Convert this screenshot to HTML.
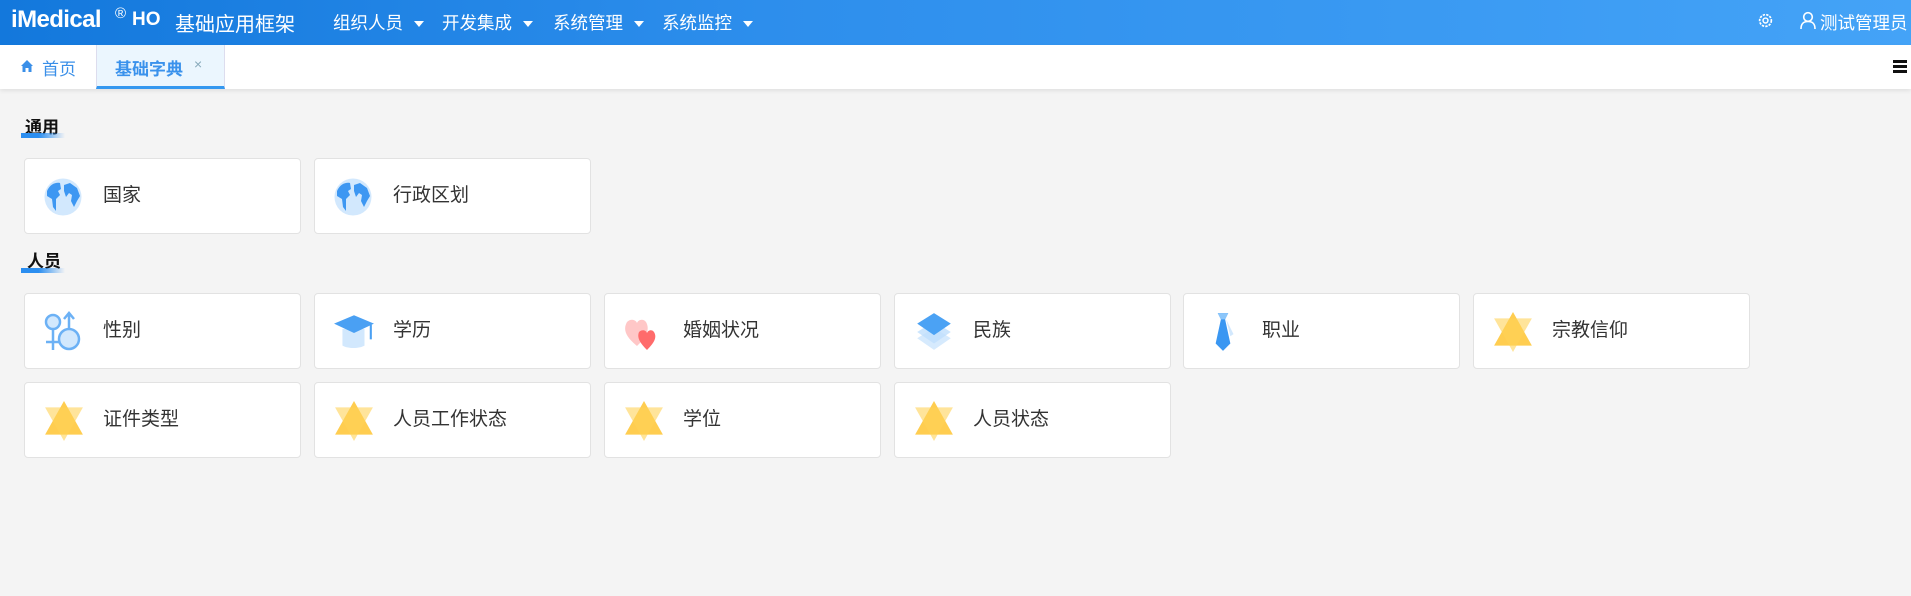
<!DOCTYPE html>
<html><head><meta charset="utf-8"><style>
*{margin:0;padding:0;box-sizing:border-box}
body{width:1911px;height:596px;background:#f4f4f4;font-family:"Liberation Sans","Noto Sans CJK SC",sans-serif;position:relative;overflow:hidden}
.hd{position:absolute;left:0;top:0;width:1911px;height:45px;background:linear-gradient(90deg,#1378dc 0%,#2d8eec 40%,#44a3f7 100%);color:#fff}
.a{position:absolute;white-space:nowrap}
.tri{display:inline-block;width:0;height:0;border-left:5px solid transparent;border-right:5px solid transparent;border-top:6px solid #fff;vertical-align:middle}
.tb{position:absolute;left:0;top:45px;width:1911px;height:44px;background:#fff;box-shadow:0 2px 4px rgba(0,0,0,.08)}
.card{position:absolute;width:277px;height:76px;background:#fff;border:1px solid #e2e2e2;border-radius:4px}
.card svg{position:absolute;left:18px;top:17px}
.card span{position:absolute;left:78px;top:26px;font-size:19px;color:#333;line-height:22px}
.sec{position:absolute;font-size:17px;font-weight:bold;color:#111;line-height:20px}
.bar{position:absolute;height:5px;width:44px;background:linear-gradient(90deg,#2b8ef0 0%,#2b8ef0 40%,rgba(43,142,240,0) 100%)}
</style></head><body>
<div class="hd">
 <div class="a" style="left:11px;top:6px;font-size:24px;font-weight:bold;letter-spacing:-0.6px">iMedical</div>
 <div class="a" style="left:115px;top:5px;font-size:15px">®</div>
 <div class="a" style="left:132px;top:9px;font-size:19px;font-weight:bold">HO</div>
 <div class="a" style="left:175px;top:8px;font-size:20px">基础应用框架</div>
 <div class="a" style="left:333px;top:10px;font-size:17.5px">组织人员 <span class="tri" style="margin-left:6px"></span></div>
 <div class="a" style="left:442px;top:10px;font-size:17.5px">开发集成 <span class="tri" style="margin-left:6px"></span></div>
 <div class="a" style="left:553px;top:10px;font-size:17.5px">系统管理 <span class="tri" style="margin-left:6px"></span></div>
 <div class="a" style="left:662px;top:10px;font-size:17.5px">系统监控 <span class="tri" style="margin-left:6px"></span></div>
 <svg class="a" style="left:1757px;top:12px" width="17" height="17" viewBox="0 0 16 16"><circle cx="8" cy="8" r="5.5" fill="none" stroke="#fff" stroke-width="1.6" stroke-dasharray="2.2 1.1"/><circle cx="8" cy="8" r="2.3" fill="none" stroke="#fff" stroke-width="1.4"/></svg>
 <svg class="a" style="left:1799px;top:11px" width="18" height="19" viewBox="0 0 18 19"><circle cx="9" cy="6" r="4.3" fill="none" stroke="#fff" stroke-width="1.6"/><path d="M2 18 C2 12 5 10.5 9 10.5 C13 10.5 16 12 16 18" fill="none" stroke="#fff" stroke-width="1.6"/></svg>
 <div class="a" style="left:1820px;top:10px;font-size:17.5px">测试管理员</div>
</div>
<div class="tb">
 <svg class="a" style="left:20px;top:14px" width="14" height="14" viewBox="0 0 14 14"><path d="M7 1 L13 7 L11.5 7 L11.5 13 L8.5 13 L8.5 9 L5.5 9 L5.5 13 L2.5 13 L2.5 7 L1 7 Z" fill="#3a8fe8"/></svg>
 <div class="a" style="left:42px;top:10px;font-size:17px;color:#3a8fe8">首页</div>
 <div class="a" style="left:96px;top:0;width:129px;height:44px;background:#ebf6fe;border-left:1px solid #dde;border-right:1px solid #dde;border-bottom:3px solid #3498f0"></div>
 <div class="a" style="left:115px;top:10px;font-size:17px;font-weight:bold;color:#3a92ec">基础字典</div>
 <div class="a" style="left:194px;top:11px;font-size:14px;color:#8ab">×</div>
 <div class="a" style="left:1893px;top:15px;width:14px;height:2.5px;background:#111;box-shadow:0 5px 0 #111,0 10px 0 #111"></div>
</div>
<div class="sec" style="left:25px;top:118px">通用</div><div class="bar" style="left:21px;top:133px"></div>
<div class="sec" style="left:27px;top:252px">人员</div><div class="bar" style="left:21px;top:268px"></div>

<svg width="0" height="0" style="position:absolute"><defs>
<symbol id="globe" viewBox="0 0 40 40"><circle cx="20" cy="20" r="18.5" fill="#d2e8fd"/><path d="M4 14 C7 7 13 5 17 6 L18 12 L15 14 L17 18 L13 22 L13 34 L10 30 L9 22 L4 19Z M21 8 L27 6 L34 11 L37 19 L34 24 L31 30 L28 24 L29 18 L26 16 L23 20 L21 14Z" fill="#3d97f2"/></symbol>
<symbol id="star" viewBox="0 0 40 40"><path d="M20 1 L38 33 L2 33Z" fill="#ffc83d" opacity=".9"/><path d="M20 39 L38 7 L2 7Z" fill="#ffd257" opacity=".6"/></symbol>
</defs></svg>

<div class="card" style="left:24px;top:158px"><svg width="40" height="42"><use href="#globe"/></svg><span>国家</span></div>
<div class="card" style="left:314px;top:158px"><svg width="40" height="42"><use href="#globe"/></svg><span>行政区划</span></div>

<div class="card" style="left:24px;top:293px"><svg width="40" height="42" viewBox="0 0 40 40"><circle cx="10" cy="10" r="7" fill="#d2e8fd" stroke="#6cb1f5" stroke-width="2.5"/><path d="M10 17 V38 M3 30 H17" stroke="#6cb1f5" stroke-width="2.5"/><circle cx="26" cy="27" r="10" fill="#d2e8fd" stroke="#6cb1f5" stroke-width="2.5"/><path d="M26 17 V2 M21 7 L26 1 L31 7" fill="none" stroke="#6cb1f5" stroke-width="2.5"/></svg><span>性别</span></div>
<div class="card" style="left:314px;top:293px"><svg width="42" height="42" viewBox="0 0 40 40"><path d="M9 17 V33 C14 36 25 36 30 33 V17Z" fill="#d2e8fd"/><path d="M1 12 L20 4 L39 12 L20 21Z" fill="#4aa0f3"/><path d="M36 13 V27" stroke="#4aa0f3" stroke-width="2"/></svg><span>学历</span></div>
<div class="card" style="left:604px;top:293px"><svg width="40" height="42" viewBox="0 0 40 40"><path d="M14 34 C2 24 0 17 4 10 C8 6 13 8 14 11 C15 8 20 6 23 10 C27 17 24 24 14 34Z" fill="#ffc7c7"/><path d="M24 38 C16 30 14 25 16 20 C19 17 23 18 24 21 C25 18 29 17 31 20 C34 25 32 30 24 38Z" fill="#ff6b6b"/></svg><span>婚姻状况</span></div>
<div class="card" style="left:894px;top:293px"><svg width="42" height="42" viewBox="0 0 40 40"><path d="M20 16 L36 26 L20 37 L4 26Z" fill="#d6eafd"/><path d="M20 10 L36 20 L20 31 L4 20Z" fill="#bfdffc" opacity=".8"/><path d="M20 2 L36 12 L20 23 L4 12Z" fill="#4ba2f4"/></svg><span>民族</span></div>
<div class="card" style="left:1183px;top:293px"><svg width="42" height="42" viewBox="0 0 40 40"><path d="M15 2 H25 L22 8 L27 31 L20 38 L13 31 L18 8Z" fill="#3a97f2"/><path d="M15 2 H25 L22 8 H18Z" fill="#8cc6fa"/><path d="M23 8 L30 22 L27 24Z" fill="#d2e8fd"/></svg><span>职业</span></div>
<div class="card" style="left:1473px;top:293px"><svg width="42" height="42"><use href="#star"/></svg><span>宗教信仰</span></div>

<div class="card" style="left:24px;top:382px"><svg width="42" height="42"><use href="#star"/></svg><span>证件类型</span></div>
<div class="card" style="left:314px;top:382px"><svg width="42" height="42"><use href="#star"/></svg><span>人员工作状态</span></div>
<div class="card" style="left:604px;top:382px"><svg width="42" height="42"><use href="#star"/></svg><span>学位</span></div>
<div class="card" style="left:894px;top:382px"><svg width="42" height="42"><use href="#star"/></svg><span>人员状态</span></div>
</body></html>
